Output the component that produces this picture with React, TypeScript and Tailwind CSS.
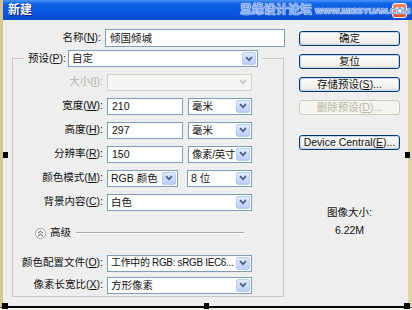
import type { ReactNode } from "react";

function Chevron({ disabled }: { disabled?: boolean }) {
  return (
    <div
      className={
        disabled
          ? "mr-[1px] flex h-[13px] w-[14px] shrink-0 items-center justify-center"
          : "mr-[1px] flex h-[13px] w-[14px] shrink-0 items-center justify-center rounded-[2px] border border-[#b9cdf4] bg-[linear-gradient(to_bottom,#dfe9fd,#b9cff9)]"
      }
    >
      <svg width="8" height="6" viewBox="0 0 8 6">
        <path d="M1 1.2l3 3 3-3" fill="none" stroke={disabled ? "#c8c8c8" : "#4d6185"} strokeWidth="1.7" />
      </svg>
    </div>
  );
}

function Select({
  children,
  className,
  disabled,
  textClass,
}: {
  children?: ReactNode;
  className: string;
  disabled?: boolean;
  textClass?: string;
}) {
  return (
    <div
      className={`flex h-[17px] items-center border ${
        disabled ? "border-[#d3d1c7] bg-[#f4f4f2]" : "border-[#7f9db9] bg-white"
      } ${className}`}
    >
      <span className={`min-w-0 flex-1 whitespace-nowrap pl-[3px] leading-none ${textClass ?? ""}`}>{children}</span>
      <Chevron disabled={disabled} />
    </div>
  );
}

function Input({ children, className }: { children?: ReactNode; className: string }) {
  return (
    <div className={`flex items-center border border-[#7f9db9] bg-white pl-[4px] leading-none ${className}`}>
      {children}
    </div>
  );
}

function Btn({ children, disabled }: { children: ReactNode; disabled?: boolean }) {
  return (
    <div
      className={
        disabled
          ? "flex h-[15px] w-[101px] items-center justify-center rounded-[3px] border border-[#cdcbc0] bg-[#f4f4f0] text-[#b6b4a6]"
          : "flex h-[15px] w-[101px] items-center justify-center rounded-[3px] border border-[#003c74] bg-[linear-gradient(to_bottom,#ffffff,#f0efea_80%,#d9d4c9)] shadow-[inset_0_0_0_1px_#c6d6f2]"
      }
    >
      {children}
    </div>
  );
}

function Row({ label, children, dim }: { label: ReactNode; children: ReactNode; dim?: boolean }) {
  return (
    <div className="flex h-[24px] items-center">
      <span className={`w-[94px] shrink-0 pr-[4px] text-right ${dim ? "text-[#b4b2a6]" : ""}`}>{label}</span>
      {children}
    </div>
  );
}

function Key({ k }: { k: string }) {
  return <span className="underline underline-offset-1">{k}</span>;
}

export default function App() {
  return (
    <div className="relative h-[310px] w-[412px] overflow-hidden bg-[#f4f1e6] font-['Liberation_Sans','Noto_Sans_CJK_SC',sans-serif] text-[10.5px] text-[#111]">
      <div className="flex h-[308px] flex-col">
        {/* title bar */}
        <div className="relative flex h-[20px] items-center border-l-[3px] border-l-[#d9c590] bg-[linear-gradient(to_bottom,#4a94f7_0%,#1064e6_18%,#0756e0_55%,#0a4ccd_100%)] pl-[5px]">
          <span className="text-[12px] font-bold text-white [text-shadow:1px_1px_0_#0a2a7a]">新建</span>
          <div className="ml-auto mr-[5px] flex h-[15px] w-[15px] items-center justify-center rounded-[3px] border border-white bg-[linear-gradient(to_bottom,#f08a6c,#d9482a)]">
            <svg width="9" height="9" viewBox="0 0 9 9">
              <path d="M1.5 1.5l6 6M7.5 1.5l-6 6" stroke="#fff" strokeWidth="1.8" />
            </svg>
          </div>
          <div className="absolute left-[237px] top-[4px] flex items-end gap-[3px] leading-none">
            <span className="text-[12px] font-bold text-[#6d9cf0] [text-shadow:0_0_1px_#fff,0_0_1px_#fff,0_0_1px_#fff]">思缘设计论坛</span>
            <span className="text-[9px] font-bold tracking-[-0.2px] text-[#6d9cf0] [text-shadow:0_0_1px_#fff,0_0_1px_#fff,0_0_1px_#fff]">WWW.MISSYUAN.COM</span>
          </div>
        </div>

        {/* body */}
        <div className="flex flex-1 border-b-2 border-l-[3px] border-r-[4px] border-b-black border-l-[#d9c590] border-r-[#e0d3a4] bg-[#eeeeee]">
          <div className="flex w-[293px] flex-col">
            <div className="mt-[9px] flex h-[18px] items-center">
              <span className="w-[102px] pr-[4px] text-right">
                名称(<Key k="N" />):
              </span>
              <Input className="h-[18px] w-[180px]">倾国倾城</Input>
            </div>

            <div className="ml-[9px] mt-[11px] flex h-[239px] w-[272px] flex-col border border-[#c9c9c0]">
              <div className="-mt-[9px] flex h-[17px] items-center">
                <span className="ml-[11px] w-[44px] bg-[#eeeeee] pr-[2px] text-right">
                  预设(<Key k="P" />):
                </span>
                <div className="bg-[#eeeeee] pr-[4px]">
                  <Select className="w-[190px]">自定</Select>
                </div>
              </div>

              <div className="mt-[3px]">
                <Row label={<>大小(<Key k="I" />):</>} dim>
                  <Select className="w-[145px]" disabled />
                </Row>
                <Row label={<>宽度(<Key k="W" />):</>}>
                  <Input className="h-[17px] w-[76px]">210</Input>
                  <Select className="ml-[5px] w-[64px]">毫米</Select>
                </Row>
                <Row label={<>高度(<Key k="H" />):</>}>
                  <Input className="h-[17px] w-[76px]">297</Input>
                  <Select className="ml-[5px] w-[64px]">毫米</Select>
                </Row>
                <Row label={<>分辨率(<Key k="R" />):</>}>
                  <Input className="h-[17px] w-[76px]">150</Input>
                  <Select className="ml-[5px] w-[64px]" textClass="tracking-[-0.4px]">
                    像素/英寸
                  </Select>
                </Row>
                <Row label={<>颜色模式(<Key k="M" />):</>}>
                  <Select className="w-[71px]">RGB 颜色</Select>
                  <Select className="ml-[9px] w-[65px]">8 位</Select>
                </Row>
                <Row label={<>背景内容(<Key k="C" />):</>}>
                  <Select className="w-[145px]">白色</Select>
                </Row>
              </div>

              <div className="mt-[10px] flex h-[18px] items-center">
                <div className="ml-[22px] flex h-[11px] w-[11px] items-center justify-center rounded-full border border-[#9c9c9c] bg-white">
                  <svg width="7" height="7" viewBox="0 0 7 7">
                    <path d="M1 3.3l2.5-2.3 2.5 2.3M1 6.3l2.5-2.3 2.5 2.3" fill="none" stroke="#333" strokeWidth="1" />
                  </svg>
                </div>
                <span className="ml-[4px]">高级</span>
                <div className="ml-[5px] mr-[39px] h-[2px] flex-1 border-t border-b border-t-[#a9a9a9] border-b-white" />
              </div>

              <div className="mt-[10px]">
                <div className="flex h-[22px] items-center">
                  <span className="w-[94px] shrink-0 pr-[4px] text-right">
                    颜色配置文件(<Key k="O" />):
                  </span>
                  <Select className="w-[145px]" textClass="text-[10px] tracking-[-0.35px]">
                    工作中的 RGB: sRGB IEC6...
                  </Select>
                </div>
                <div className="flex h-[22px] items-center">
                  <span className="w-[94px] shrink-0 pr-[4px] text-right">
                    像素长宽比(<Key k="X" />):
                  </span>
                  <Select className="w-[145px]">方形像素</Select>
                </div>
              </div>
            </div>
          </div>

          <div className="flex flex-col pl-[3px] pt-[11px]">
            <div className="flex flex-col gap-[8px]">
              <Btn>确定</Btn>
              <Btn>复位</Btn>
              <Btn>
                存储预设(<Key k="S" />)...
              </Btn>
              <Btn disabled>
                删除预设(<Key k="D" />)...
              </Btn>
            </div>
            <div className="mt-[20px]">
              <Btn>
                Device Central(<Key k="E" />)...
              </Btn>
            </div>
            <div className="mt-[56px] w-[101px] text-center leading-[13px]">图像大小:</div>
            <div className="mt-[5px] w-[101px] text-center leading-[13px]">6.22M</div>
          </div>
        </div>
      </div>

      {/* selection handles */}
      <div className="absolute left-[3px] top-[152px] h-[6px] w-[5px] bg-black" />
      <div className="absolute left-[405px] top-[152px] h-[6px] w-[5px] bg-black" />
      <div className="absolute left-[2px] top-[303px] h-[6px] w-[6px] bg-black" />
      <div className="absolute left-[204px] top-[303px] h-[6px] w-[5px] bg-black" />
      <div className="absolute left-[404px] top-[303px] h-[6px] w-[6px] bg-black" />
    </div>
  );
}
